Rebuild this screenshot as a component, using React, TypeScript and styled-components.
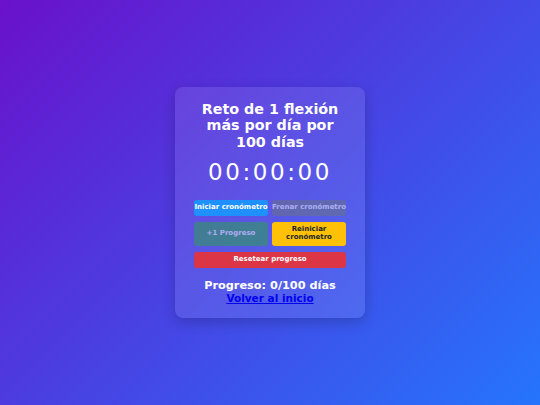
import React from "react";
import styled, { createGlobalStyle } from "styled-components";

const Global = createGlobalStyle`
  html, body { margin: 0; padding: 0; height: 100%; }
  body {
    font-family: "DejaVu Sans", Verdana, sans-serif;
    background: linear-gradient(135deg, #6a11cb 0%, #2575fc 100%);
    min-height: 100vh;
  }
  #root { min-height: 100vh; }
`;

const Page = styled.div`
  min-height: 100vh;
  display: flex;
  align-items: center;
  justify-content: center;
`;

const Card = styled.div`
  width: 190px;
  box-sizing: border-box;
  padding: 14px 20px 13px;
  background: rgba(255, 255, 255, 0.1);
  border-radius: 8px;
  box-shadow: 0 4px 14px rgba(0, 0, 0, 0.2);
  text-align: center;
  color: #fff;
`;

const Title = styled.h1`
  margin: 0;
  font-size: 14.3px;
  line-height: 16.5px;
  font-weight: bold;
`;

const Timer = styled.div`
  margin: 9px 0 14.5px;
  font-size: 23px;
  line-height: 26px;
  letter-spacing: 2.6px;
  font-weight: normal;
`;

const Grid = styled.div`
  display: grid;
  grid-template-columns: 1fr 1fr;
  gap: 5.5px 4px;
  margin: 0 -1px;
`;

const Btn = styled.button<{ $bg: string; $fg: string; $wide?: boolean }>`
  grid-column: ${(p) => (p.$wide ? "1 / span 2" : "auto")};
  background: ${(p) => p.$bg};
  color: ${(p) => p.$fg};
  border: none;
  border-radius: 3px;
  padding: 4.4px 0;
  font-family: "DejaVu Sans", Verdana, sans-serif;
  font-size: 7px;
  line-height: 7.8px;
  font-weight: bold;
  white-space: normal;
  &:disabled { opacity: 0.5; }
`;

const Progress = styled.div`
  margin-top: 11px;
  font-size: 11.3px;
  line-height: 13px;
  font-weight: bold;
`;

const Link = styled.a`
  display: block;
  font-size: 10.5px;
  line-height: 13px;
  font-weight: bold;
  color: #0000ee;
  text-decoration: underline;
`;

export default function App() {
  return (
    <>
      <Global />
      <Page>
        <Card>
          <Title>Reto de 1 flexión más por día por 100 días</Title>
          <Timer>00:00:00</Timer>
          <Grid>
            <Btn $bg="#1e90ff" $fg="#fff">Iniciar cronómetro</Btn>
            <Btn $bg="#6c757d" $fg="#fff" disabled>Frenar cronómetro</Btn>
            <Btn $bg="#28a745" $fg="#fff" disabled>+1 Progreso</Btn>
            <Btn $bg="#ffc107" $fg="#212529">Reiniciar cronómetro</Btn>
            <Btn $bg="#dc3545" $fg="#fff" $wide>Resetear progreso</Btn>
          </Grid>
          <Progress>Progreso: 0/100 días</Progress>
          <Link href="#">Volver al inicio</Link>
        </Card>
      </Page>
    </>
  );
}
